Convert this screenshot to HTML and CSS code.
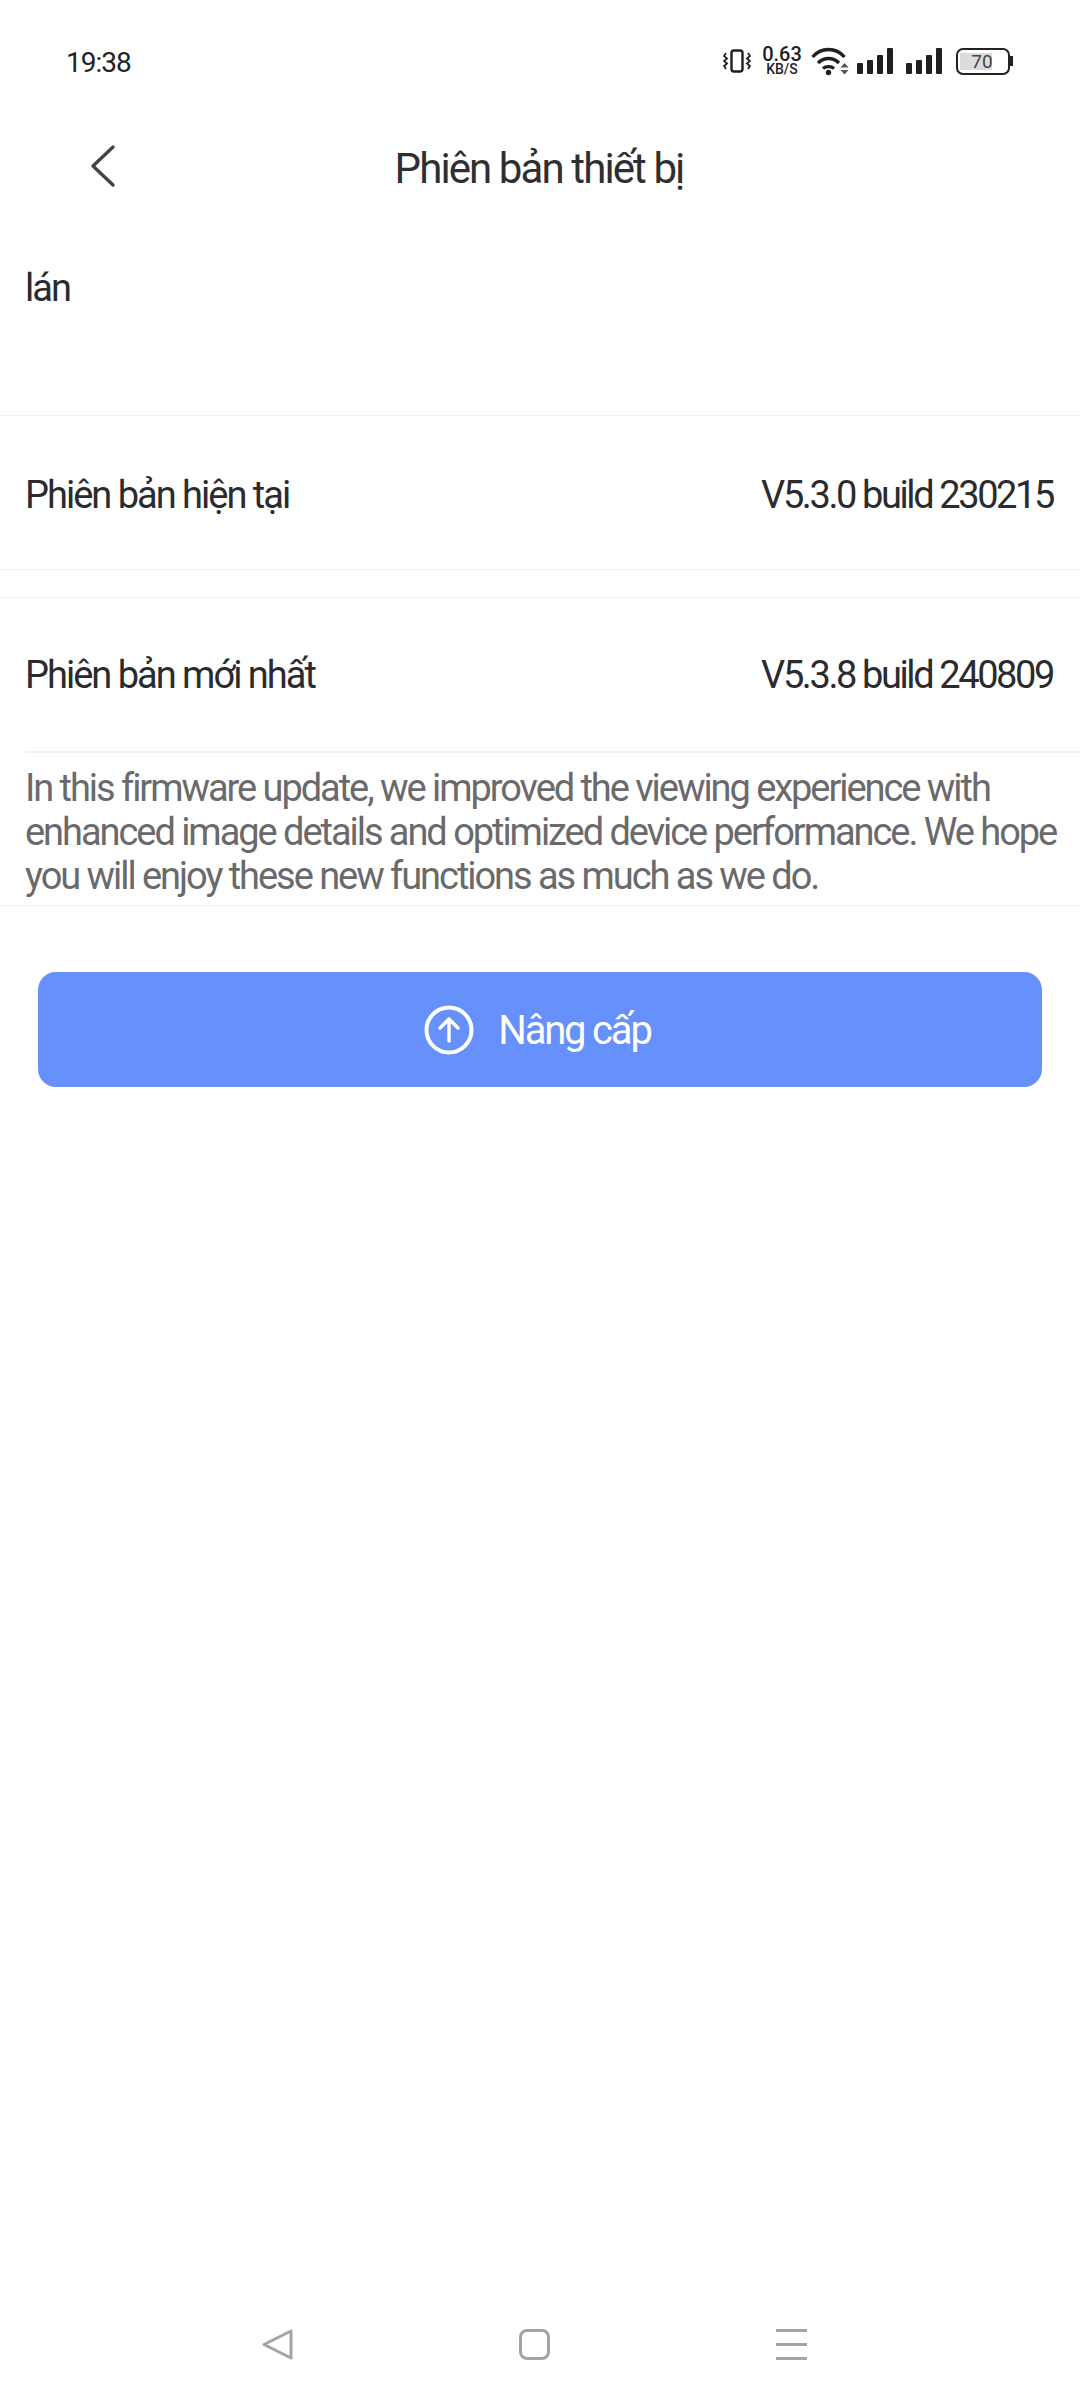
FILE: index.html
```html
<!DOCTYPE html>
<html lang="vi">
<head>
<meta charset="utf-8">
<title>Phiên bản thiết bị</title>
<link rel="stylesheet" href="styles.css">
</head>
<body>
<div class="screen">
  <div class="status">
    <span class="clock">19:38</span>
    <div class="status-icons">
      <svg class="ic-vib" width="28" height="24" viewBox="0 0 28 24" fill="none" stroke="#1f1f1f" stroke-width="2.4"><rect x="8.500" y="1.500" width="11" height="21" rx="2.500"/><path d="M3 4L1 7l3 2.500L1 12l3 2.500L1 17l2 3M25 4l2 3-3 2.500 3 2.500-3 2.500 3 2.500-2 3" stroke-width="1.800"/></svg>
      <div class="speed"><span class="speed-num">0.63</span><span class="speed-unit">KB/S</span></div>
      <svg class="ic-wifi" width="38" height="30" viewBox="0 0 38 30" fill="none" stroke="#1f1f1f" stroke-width="3.400"><path d="M1.500 11C10 1 25 1 33.500 11M7 17c6-6 15-6 21 0M12 22.500c3-2.500 8-2.500 11 0"/><circle cx="17.500" cy="26.500" r="2.700" fill="#1f1f1f" stroke="none"/><path d="M33.500 17l4 4.500h-8zM29.500 24h8l-4 4.500z" fill="#555" stroke="none"/></svg>
      <svg class="ic-sig sig-a" width="36" height="26" viewBox="0 0 36 26" fill="#1f1f1f"><rect x="0" y="15" width="6" height="11" rx="1"/><rect x="10" y="12" width="6" height="14" rx="1"/><rect x="20" y="7" width="6" height="19" rx="1"/><rect x="30" y="0" width="6" height="26" rx="1"/></svg>
      <svg class="ic-sig sig-b" width="36" height="26" viewBox="0 0 36 26" fill="#1f1f1f"><rect x="0" y="15" width="6" height="11" rx="1"/><rect x="10" y="12" width="6" height="14" rx="1"/><rect x="20" y="7" width="6" height="19" rx="1"/><rect x="30" y="0" width="6" height="26" rx="1"/></svg>
      <div class="battery"><div class="battery-body"><div class="battery-fill"><span class="battery-num">70</span></div></div><div class="battery-tip"></div></div>
    </div>
  </div>
  <header class="nav">
    <svg class="back" width="28" height="44" viewBox="0 0 28 44" fill="none" stroke="#444" stroke-width="3.400" stroke-linecap="round" stroke-linejoin="round"><path d="M24 3L4 22l20 19"/></svg>
    <h1 class="nav-title">Phiên bản thiết bị</h1>
  </header>
  <div class="row-name"><span class="label">lán</span></div>
  <div class="row row-current">
    <span class="label">Phiên bản hiện tại</span>
    <span class="value">V5.3.0 build 230215</span>
  </div>
  <div class="row row-latest">
    <span class="label">Phiên bản mới nhất</span>
    <span class="value">V5.3.8 build 240809</span>
  </div>
  <div class="inset-line"></div>
  <p class="notes">In this firmware update, we improved the viewing experience with enhanced image details and optimized device performance. We hope you will enjoy these new functions as much as we do.</p>
  <button class="upgrade">
    <svg width="50" height="50" viewBox="0 0 50 50" fill="none" stroke="#fff" stroke-width="4" stroke-linecap="round" stroke-linejoin="round"><circle cx="25" cy="25" r="22.500"/><path d="M25 36V14M16 23l9-9 9 9" stroke-width="3.400"/></svg>
    <span>Nâng cấp</span>
  </button>
  <div class="spacer"></div>
  <nav class="sysnav">
    <svg width="31" height="31" viewBox="0 0 31 31" fill="none" stroke="#a3a3a3" stroke-width="3" stroke-linejoin="round"><path d="M29 2v27L2 15.500z"/></svg>
    <svg width="31" height="31" viewBox="0 0 31 31" fill="none" stroke="#a3a3a3" stroke-width="3"><rect x="1.500" y="1.500" width="28" height="28" rx="6.500"/></svg>
    <svg width="31" height="31" viewBox="0 0 31 31" fill="#a3a3a3"><rect y="0" width="31" height="3"/><rect y="14" width="31" height="3"/><rect y="28" width="31" height="3"/></svg>
  </nav>
</div>
</body>
</html>
```

FILE: styles.css
```css
* { box-sizing: border-box; }
html, body { margin: 0; padding: 0; background: #fff; }
.screen {
  width: 1080px;
  height: 2400px;
  display: flex;
  flex-direction: column;
  font-family: Roboto, "Noto Sans", sans-serif;
  color: #2b2b2d;
  overflow: hidden;
}
.status {
  height: 124px;
  padding: 47px 67px 0 66px;
  display: flex;
  justify-content: space-between;
  align-items: flex-start;
}
.clock { font-size: 28px; line-height: 32px; letter-spacing: -1px; color: #222; }
.status-icons { display: flex; align-items: center; height: 28px; }
.speed { display: flex; flex-direction: column; align-items: center; width: 40px; margin-left: 11px; font-weight: 500; color: #1f1f1f; }
.speed-num { font-size: 20px; line-height: 16px; }
.speed-unit { font-size: 14px; line-height: 14px; }
.ic-wifi { margin-left: 9px; }
.sig-a { margin-left: 8px; }
.sig-b { margin-left: 13px; }
.battery { display: flex; align-items: center; margin-left: 14px; }
.battery-body { width: 54px; height: 27px; border: 2px solid #222; border-radius: 7px; padding: 3px 2px; }
.battery-fill { width: 32px; height: 17px; background: #dcdcdc; display: flex; align-items: center; justify-content: center; }
.battery-num { font-size: 19px; color: #444; padding-left: 12px; white-space: nowrap; }
.battery-tip { width: 3px; height: 10px; background: #222; }
.nav { height: 88px; position: relative; display: flex; align-items: center; justify-content: center; }
.back { position: absolute; left: 89px; top: 20px; }
.nav-title { margin: 0; font-size: 42px; font-weight: 400; letter-spacing: -1.900px; color: #2f2f31; padding-right: 2px; }
.row-name { height: 204px; padding: 54px 25px 0; border-bottom: 1.500px solid #f1f1f1; }
.label, .value { font-size: 38px; line-height: 44px; letter-spacing: -2px; color: #2b2b2d; }
.value { letter-spacing: -2.400px; }
.row { display: flex; justify-content: space-between; align-items: center; padding: 0 27px 0 25px; height: 154px; }
.row-current { padding-top: 5px; border-bottom: 1.500px solid #f1f1f1; }
.row-latest { margin-top: 27px; border-top: 1.500px solid #f1f1f1; }
.inset-line { height: 1.500px; margin-left: 25px; background: #f1f1f1; }
.notes {
  margin: 0;
  padding: 13px 10px 7px 25px;
  border-bottom: 1.500px solid #f1f1f1;
  font-size: 38px;
  line-height: 44px;
  letter-spacing: -2.050px;
  color: #6a6a6c;
}
.upgrade {
  margin: 66px 38px 0;
  height: 115px;
  flex: none;
  border: 0;
  border-radius: 18px;
  background: #6690fb;
  color: #fff;
  font: inherit;
  font-size: 40px;
  letter-spacing: -2.200px;
  display: flex;
  align-items: center;
  justify-content: center;
  gap: 24px;
  padding: 2px 5px 0 0;
}
.spacer { flex: 1; }
.sysnav { height: 71px; padding: 0 273px 0 262px; display: flex; justify-content: space-between; align-items: flex-start; }
```
